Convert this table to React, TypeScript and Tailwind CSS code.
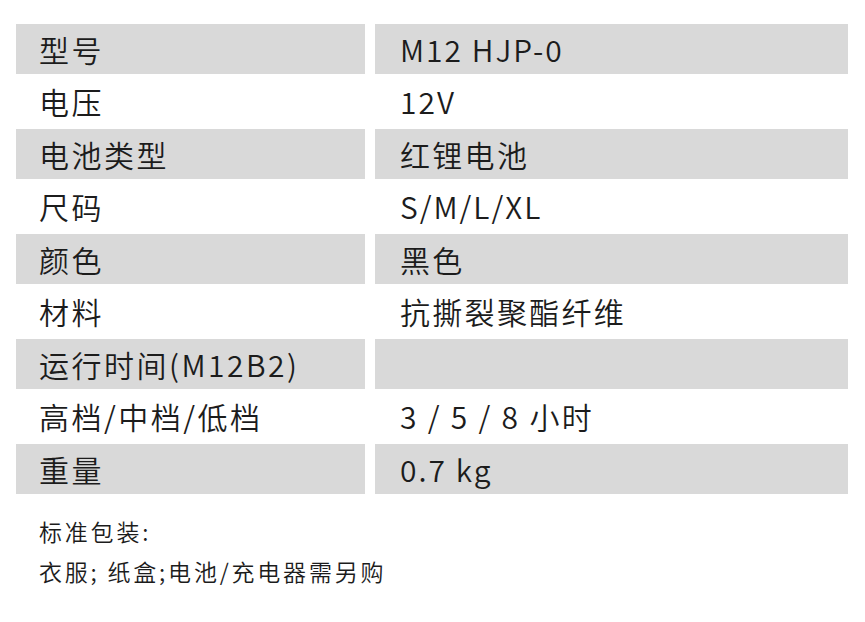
import React from "react";

const rows: [string, string][] = [
  ["型号", "M12 HJP-0"],
  ["电压", "12V"],
  ["电池类型", "红锂电池"],
  ["尺码", "S/M/L/XL"],
  ["颜色", "黑色"],
  ["材料", "抗撕裂聚酯纤维"],
  ["运行时间(M12B2)", ""],
  ["高档/中档/低档", "3 / 5 / 8 小时"],
  ["重量", "0.7 kg"],
];

const latin = /^[\x20-\x7e]+$/;

export default function App() {
  return (
    <div
      className="h-[622px] w-[865px] bg-white px-4 pt-6 font-[350] text-[#1c1c1c]"
      style={{ fontFamily: '"Noto Sans CJK SC", "Noto Sans", sans-serif' }}
    >
      <div className="grid grid-cols-[349px_473px] gap-x-[10px] gap-y-[2.5px]">
        {rows.map(([label, value], i) => {
          const bg = i % 2 === 0 ? "bg-[#d9d9d9]" : "bg-white";
          return (
            <React.Fragment key={label}>
              <div className={`flex h-[50px] items-center pl-[23px] text-[30px] tracking-[2.5px] ${bg}`}>
                {label}
              </div>
              <div
                className={`flex h-[50px] items-center pl-[25px] text-[30px] ${
                  latin.test(value) ? "tracking-[2px]" : "tracking-[2.3px]"
                } ${bg}`}
              >
                {value}
              </div>
            </React.Fragment>
          );
        })}
      </div>
      <div className="mt-[17px] pl-[23px] text-[23px] leading-[40px] tracking-[2.8px]">
        <p>标准包装:</p>
        <p>衣服; 纸盒;电池/充电器需另购</p>
      </div>
    </div>
  );
}
